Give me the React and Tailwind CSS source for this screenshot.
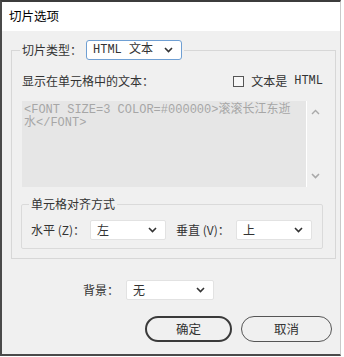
import React from 'react';

const cjk = 'font-["Noto_Sans_CJK_SC","Noto_Sans",sans-serif]';
const mono = 'font-["Liberation_Mono","Noto_Sans_CJK_SC",monospace]';

// small dark chevron used by the selects
const Chevron = ({ color = '#333' }) => (
  <svg width="9" height="6" viewBox="0 0 9 6" className="shrink-0">
    <polyline points="1,1 4.5,4.5 8,1" fill="none" stroke={color} strokeWidth="1.6" />
  </svg>
);

const Select = ({ value, className = '', focused = false, valueClass = '' }) => (
  <div
    className={`h-[20px] flex items-center justify-between bg-white pl-[6px] pr-[8px] ${
      focused ? 'border border-[#6f9fd3] rounded-[3px]' : 'border border-[#e2e2e2] rounded-[2px]'
    } ${className}`}
  >
    <span className={`text-[12px] leading-none text-[#333] ${valueClass}`}>{value}</span>
    <Chevron />
  </div>
);

const App = () => {
  return (
    <div className={`w-[344px] h-[357px] bg-white ${cjk}`}>
      <div className="w-[341px] h-[356px] border-t-2 border-l-2 border-b-2 border-r border-t-[#3c3c3c] border-l-[#4a4a4a] border-b-[#4a4a4a] border-r-[#c9c9c9] bg-[#f0f0f0] flex flex-col">
        {/* Title bar */}
        <div className="h-[29px] bg-white flex items-center pl-[7px] text-[12.5px] text-black">
          切片选项
        </div>

        <div className="pl-[9px] pt-[9px]">
          {/* Outer group */}
          <fieldset className="w-[323px] border border-[#d7d7d7] pl-[10px] pr-[12px] pb-[9px]">
            <legend className="-ml-[2px] px-[2px] flex items-center">
              <span className="text-[12px] text-[#333] mr-[4px]">切片类型：</span>
              <Select
                value="HTML 文本"
                focused
                className="w-[96px]"
                valueClass={`${mono} text-[11px]`}
              />
            </legend>

            <div className="mt-[13px] h-[16px] flex items-center justify-between">
              <span className="text-[12px] text-[#333]">显示在单元格中的文本：</span>
              <div className="flex items-center">
                <span className="w-[11px] h-[11px] border border-[#555] bg-[#f7f7f7] mr-[7px]" />
                <span className="text-[12px] text-[#333]">文本是</span>
                <span className={`${mono} text-[12px] text-[#333] ml-[7px]`}>HTML</span>
              </div>
            </div>

            {/* Text area */}
            <div className="mt-[12px] h-[86px] flex bg-[#e6e6e6]">
              <div className={`flex-1 pl-[2px] pt-[3px] text-[12px] leading-[13px] text-[#a6a6a6] ${mono}`}>
                {'<FONT SIZE=3 COLOR=#000000>滚滚长江东逝'}
                <br />
                {'水</FONT>'}
              </div>
              <div className="w-[17px] bg-[#f0f0f0] border-l border-white flex flex-col items-center justify-between py-[8px]">
                <svg width="9" height="6" viewBox="0 0 9 6">
                  <polyline points="1,5 4.5,1.5 8,5" fill="none" stroke="#a9a9a9" strokeWidth="1.4" />
                </svg>
                <Chevron color="#a9a9a9" />
              </div>
            </div>

            {/* Inner group */}
            <fieldset className="mt-[9px] -ml-px w-[302px] border border-[#dadada] rounded-[2px] pl-[9px] pb-[8px]">
              <legend className="px-[2px] -ml-[2px] text-[12px] text-[#333] leading-[16px]">
                单元格对齐方式
              </legend>
              <div className="mt-[8px] flex items-center">
                <span className="text-[12px] text-[#333] w-[59px]">水平 (Z)：</span>
                <Select value="左" className="w-[76px]" />
                <span className="text-[12px] text-[#333] ml-[10px] w-[60px]">垂直 (V)：</span>
                <Select value="上" className="w-[76px]" />
              </div>
            </fieldset>
          </fieldset>
        </div>

        {/* Background */}
        <div className="mt-[21px] flex items-center pl-[81px]">
          <span className="text-[12px] text-[#333] w-[43px]">背景：</span>
          <Select value="无" className="w-[88px]" />
        </div>

        {/* Buttons */}
        <div className="mt-[16px] flex pl-[143px] gap-[9px]">
          <button className="w-[87px] h-[26px] rounded-full border-2 border-[#3a3a3a] text-[12.5px] text-[#333] bg-[#f0f0f0]">
            确定
          </button>
          <button className="w-[91px] h-[26px] rounded-full border border-[#555] text-[12.5px] text-[#333] bg-[#f0f0f0]">
            取消
          </button>
        </div>
      </div>
    </div>
  );
};

export default App;
